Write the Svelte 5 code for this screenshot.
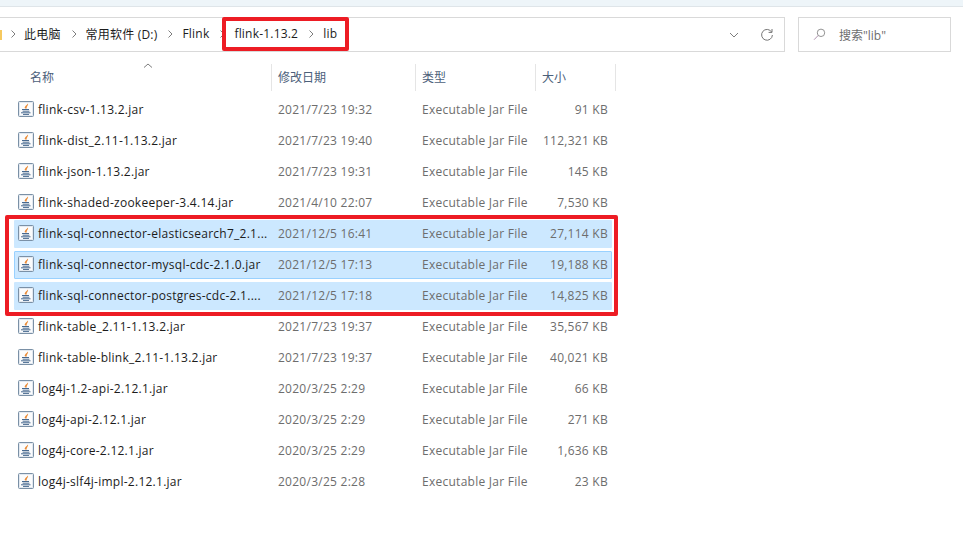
<script>
	const files = [
		{ name: 'flink-csv-1.13.2.jar', date: '2021/7/23 19:32', size: '91 KB' },
		{ name: 'flink-dist_2.11-1.13.2.jar', date: '2021/7/23 19:40', size: '112,321 KB' },
		{ name: 'flink-json-1.13.2.jar', date: '2021/7/23 19:31', size: '145 KB' },
		{ name: 'flink-shaded-zookeeper-3.4.14.jar', date: '2021/4/10 22:07', size: '7,530 KB' },
		{ name: 'flink-sql-connector-elasticsearch7_2.1...', date: '2021/12/5 16:41', size: '27,114 KB', selected: true },
		{ name: 'flink-sql-connector-mysql-cdc-2.1.0.jar', date: '2021/12/5 17:13', size: '19,188 KB', selected: true, focused: true },
		{ name: 'flink-sql-connector-postgres-cdc-2.1....', date: '2021/12/5 17:18', size: '14,825 KB', selected: true },
		{ name: 'flink-table_2.11-1.13.2.jar', date: '2021/7/23 19:37', size: '35,567 KB' },
		{ name: 'flink-table-blink_2.11-1.13.2.jar', date: '2021/7/23 19:37', size: '40,021 KB' },
		{ name: 'log4j-1.2-api-2.12.1.jar', date: '2020/3/25 2:29', size: '66 KB' },
		{ name: 'log4j-api-2.12.1.jar', date: '2020/3/25 2:29', size: '271 KB' },
		{ name: 'log4j-core-2.12.1.jar', date: '2020/3/25 2:29', size: '1,636 KB' },
		{ name: 'log4j-slf4j-impl-2.12.1.jar', date: '2020/3/25 2:28', size: '23 KB' }
	];
</script>

<div class="window">
	<div class="titlebar"></div>

	<div class="toolbar">
		<div class="address">
			<span class="folder"></span>
			<span class="crumbs">
				<svg class="sep" viewBox="0 0 6 10"><path d="M1.5 1.5 5 5 1.5 8.5" /></svg>
				<span class="crumb c1">此电脑</span>
				<svg class="sep" viewBox="0 0 6 10"><path d="M1.5 1.5 5 5 1.5 8.5" /></svg>
				<span class="crumb">常用软件 (D:)</span>
				<svg class="sep" viewBox="0 0 6 10"><path d="M1.5 1.5 5 5 1.5 8.5" /></svg>
				<span class="crumb">Flink</span>
				<svg class="sep" viewBox="0 0 6 10"><path d="M1.5 1.5 5 5 1.5 8.5" /></svg>
				<span class="crumb">flink-1.13.2</span>
				<svg class="sep" viewBox="0 0 6 10"><path d="M1.5 1.5 5 5 1.5 8.5" /></svg>
				<span class="crumb">lib</span>
			</span>
			<svg class="chevron" viewBox="0 0 10 6"><path d="M1 1 5 5 9 1" /></svg>
			<svg class="refresh" viewBox="0 0 14 14"><path d="M11.6 4A5.4 5.4 0 1 0 12.4 7" /><path d="M12 1v3.4H8.6" /></svg>
		</div>
		<div class="search">
			<svg class="glass" viewBox="0 0 14 14">
				<circle class="lens" cx="8.6" cy="5.2" r="4" />
				<path class="handle" d="M5.6 8 1.2 12.6" />
			</svg>
			<span>搜索"lib"</span>
		</div>
	</div>

	<div class="header">
		<div class="col name-head">名称</div>
		<div class="col">修改日期</div>
		<div class="col">类型</div>
		<div class="col">大小</div>
		<svg class="sort" viewBox="0 0 10 5"><path d="M1 4.5 5 1 9 4.5" /></svg>
	</div>

	<div class="list">
		{#each files as file}
			<div class="row" class:selected={file.selected} class:focused={file.focused}>
				<div class="name">
					<svg class="jar" viewBox="0 0 16 16">
						<rect x="0.5" y="0.5" width="15" height="15" rx="1" class="jar-box" />
						<rect x="2" y="2" width="12" height="12" class="jar-inner" />
						<path class="flame" d="M10 2.4C10.6 4.4 8.2 5 8.8 7.6L7.2 7.6C5.6 6 8.4 4.4 10 2.4Z" />
						<path class="cup" d="M4 8.5h7M4.6 10.2h6.8M3 11.8h9.5M5 13.4h6" />
					</svg>
					<span>{file.name}</span>
				</div>
				<div>{file.date}</div>
				<div>Executable Jar File</div>
				<div class="size">{file.size}</div>
			</div>
		{/each}
	</div>

	<div class="mark mark-path"></div>
	<div class="mark mark-rows"></div>
</div>

<style>
	:global(body) {
		margin: 0;
		background: #fff;
	}

	.window {
		position: relative;
		width: 963px;
		height: 546px;
		overflow: hidden;
		background: #fff;
		font-family: 'Open Sans', 'Noto Sans CJK SC', sans-serif;
		font-size: 12px;
		color: #1c1c1c;
	}

	.titlebar {
		height: 6px;
		background: #eef5f9;
		border-bottom: 1px solid #dfe5e9;
	}

	.toolbar {
		display: flex;
		gap: 13px;
		height: 35px;
		margin-top: 10px;
	}

	.address,
	.search {
		display: flex;
		align-items: center;
		box-sizing: border-box;
		height: 35px;
		border: 1px solid #d9d9d9;
	}

	.address {
		width: 786px;
		margin-left: -1px;
		flex: none;
	}

	.folder {
		width: 2px;
		height: 10px;
		background: #f6c95f;
		flex: none;
	}

	.crumbs {
		display: flex;
		align-items: center;
		margin-left: 8px;
		padding-bottom: 2px;
		white-space: nowrap;
		letter-spacing: 0.2px;
	}

	.sep {
		width: 6px;
		height: 10px;
		flex: none;
	}
	.sep path,
	.chevron path,
	.sort path {
		fill: none;
		stroke: #7d7d7d;
		stroke-width: 1;
	}

	.crumb {
		margin: 0 10px 0 9px;
	}
	.crumbs .c1 {
		margin-left: 8px;
	}

	.chevron {
		width: 10px;
		height: 6px;
		margin-left: auto;
	}

	.refresh {
		width: 14px;
		height: 14px;
		margin: 0 10px 0 21px;
		fill: none;
		stroke: #767676;
		stroke-width: 1;
	}

	.search {
		width: 153px;
		color: #6d6d6d;
	}

	.glass {
		width: 13px;
		height: 13px;
		margin: 0 13px 0 14px;
		fill: none;
	}
	.lens {
		stroke: #8a8a8a;
	}
	.handle {
		stroke: #a889a8;
	}

	.header {
		position: relative;
		display: grid;
		grid-template-columns: 272px 144px 120px 80px;
		width: 616px;
		height: 27px;
		margin-top: 12px;
		color: #4c607a;
	}

	.col {
		display: flex;
		align-items: center;
		padding: 0 0 2px 6px;
		border-right: 1px solid #e5e5e5;
	}
	.col.name-head {
		padding-left: 30px;
	}

	.sort {
		position: absolute;
		left: 143px;
		top: -1px;
		width: 10px;
		height: 5px;
	}

	.list {
		display: flex;
		flex-direction: column;
		gap: 3px;
		margin: 5px 0 0 14px;
		width: 598px;
	}

	.row {
		display: grid;
		grid-template-columns: 258px 144px 112px 79px;
		align-items: center;
		box-sizing: border-box;
		height: 28px;
		padding-bottom: 2px;
		border: 1px solid transparent;
		border-radius: 1px;
		color: #6d6d6d;
		letter-spacing: 0.26px;
	}
	.row.selected {
		background: #cce8ff;
	}
	.row.focused {
		border-color: #99d1ff;
	}

	.name {
		display: flex;
		align-items: center;
		gap: 4px;
		padding-left: 3px;
		color: #1c1c1c;
		white-space: nowrap;
	}

	.row > div:nth-child(2),
	.row > div:nth-child(3) {
		padding-left: 5px;
	}

	.size {
		text-align: right;
	}

	.jar {
		width: 16px;
		height: 16px;
		flex: none;
	}
	.jar-box {
		fill: #e3e9f0;
		stroke: #7a90a6;
	}
	.jar-inner {
		fill: #fbfcfd;
	}
	.flame {
		fill: #ea8a35;
	}
	.cup {
		fill: none;
		stroke: #47698f;
		stroke-width: 1;
	}

	.mark {
		position: absolute;
		box-sizing: border-box;
		border: 4px solid #ed1c24;
		border-radius: 2px;
		pointer-events: none;
	}
	.mark-path {
		left: 222px;
		top: 17px;
		width: 127px;
		height: 34px;
	}
	.mark-rows {
		left: 5px;
		top: 215px;
		width: 613px;
		height: 101px;
	}
</style>
